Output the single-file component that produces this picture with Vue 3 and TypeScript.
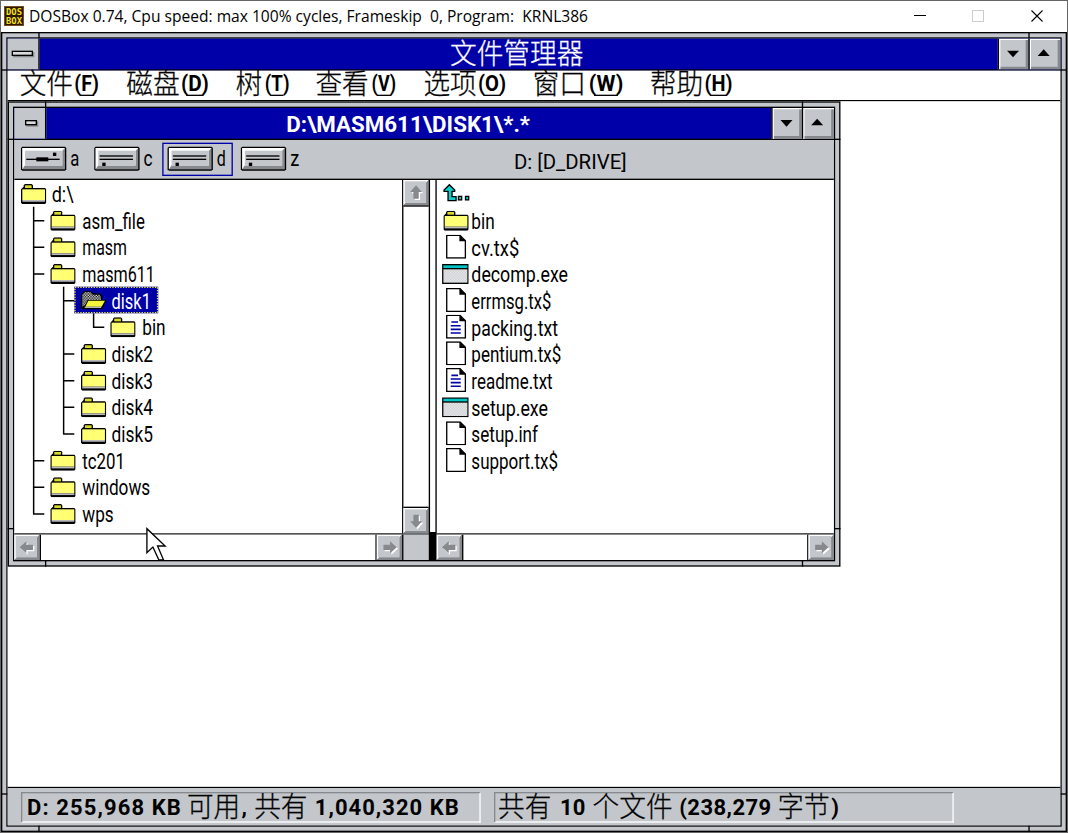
<script setup lang="ts">
import { h } from 'vue'
import type { FunctionalComponent } from 'vue'

interface Run { t: string; x: number; w: number; cjk?: boolean }
interface MenuItem { label: string; key: string; w: number; k: number }
interface TreeRow { name: string; level: number; w: number; open?: boolean }
interface FileRow { name: string; kind: 'folder' | 'doc' | 'text' | 'exe'; w: number }

/* One line of text stretched to a fixed width, like a bitmap font cell run. */
const Fit: FunctionalComponent<{ t: string; w: number; height: number; base: number }> = (p) =>
  h('svg', { width: p.w, height: p.height, style: { overflow: 'visible', display: 'block', flex: 'none' } }, [
    h('text', { x: 0, y: p.base, textLength: p.w, lengthAdjust: 'spacingAndGlyphs', fill: 'currentColor', style: { whiteSpace: 'pre' } }, p.t),
  ])
Fit.props = ['t', 'w', 'height', 'base']

/* Resizable window border: double black outline, grey band and corner notches. */
const Frame: FunctionalComponent<{ w: number; h: number }> = (p) => {
  const r = (x: number, y: number, w: number, ht: number, fill = '#000') => h('rect', { x, y, width: w, height: ht, fill })
  const W = p.w
  const H = p.h
  return h('svg', { width: W, height: H }, [
    r(0, 0, W, H), r(1, 1, W - 2, H - 2, '#c3c7cb'), r(4, 4, W - 8, H - 8), r(5, 5, W - 10, H - 10, '#c3c7cb'),
    r(28, 0, 1, 5), r(W - 29, 0, 1, 5), r(28, H - 5, 1, 5), r(W - 29, H - 5, 1, 5),
    r(0, 28, 5, 1), r(W - 5, 28, 5, 1), r(0, H - 29, 5, 1), r(W - 5, H - 29, 5, 1),
  ])
}
Frame.props = ['w', 'h']

const arrows: Record<string, string> = {
  up: 'M9.5 4L14 9H11.5V14H7.5V9H5Z',
  down: 'M9.5 15L14 10H11.5V5H7.5V10H5Z',
  left: 'M4 9.5L9 5V7.5H14V11.5H9V14Z',
  right: 'M15 9.5L10 5V7.5H5V11.5H10V14Z',
}
const Arrow: FunctionalComponent<{ dir: string }> = (p) =>
  h('svg', { width: 19, height: 19, style: { display: 'block', flex: 'none' } }, [
    h('rect', { width: 19, height: 19, fill: '#868a8e' }),
    h('path', { d: 'M0 0H19L17 2V17H2L0 19Z', fill: '#fff' }),
    h('path', { d: 'M19 0V19H0L2 17H17V2Z', fill: '#868a8e' }),
    h('rect', { x: 1, y: 1, width: 16, height: 16, fill: '#c3c7cb' }),
    h('path', { d: arrows[p.dir], fill: '#fff', transform: 'translate(1 1)' }),
    h('path', { d: arrows[p.dir], fill: '#868a8e' }),
  ])
Arrow.props = ['dir']

const menu: MenuItem[] = [
  { label: '文件', key: 'F', w: 40, k: 18.5 },
  { label: '磁盘', key: 'D', w: 40, k: 21 },
  { label: '树', key: 'T', w: 20, k: 18.5 },
  { label: '查看', key: 'V', w: 40, k: 18.5 },
  { label: '选项', key: 'O', w: 40, k: 21 },
  { label: '窗口', key: 'W', w: 40, k: 26 },
  { label: '帮助', key: 'H', w: 40, k: 21 },
]

const drives = ['a', 'c', 'd', 'z']

const tree: TreeRow[] = [
  { name: 'd:\\', level: 0, w: 16.5 },
  { name: 'asm_file', level: 1, w: 47 },
  { name: 'masm', level: 1, w: 33.5 },
  { name: 'masm611', level: 1, w: 54.5 },
  { name: 'disk1', level: 2, w: 29.5, open: true },
  { name: 'bin', level: 3, w: 17.5 },
  { name: 'disk2', level: 2, w: 31 },
  { name: 'disk3', level: 2, w: 31 },
  { name: 'disk4', level: 2, w: 31 },
  { name: 'disk5', level: 2, w: 31 },
  { name: 'tc201', level: 1, w: 32 },
  { name: 'windows', level: 1, w: 51 },
  { name: 'wps', level: 1, w: 23.5 },
]

const files: FileRow[] = [
  { name: 'bin', kind: 'folder', w: 17.5 },
  { name: 'cv.tx$', kind: 'doc', w: 36 },
  { name: 'decomp.exe', kind: 'exe', w: 72.5 },
  { name: 'errmsg.tx$', kind: 'doc', w: 60 },
  { name: 'packing.txt', kind: 'text', w: 65 },
  { name: 'pentium.tx$', kind: 'doc', w: 67.5 },
  { name: 'readme.txt', kind: 'text', w: 61 },
  { name: 'setup.exe', kind: 'exe', w: 57.5 },
  { name: 'setup.inf', kind: 'doc', w: 50 },
  { name: 'support.tx$', kind: 'doc', w: 65 },
]

const disk: Run[] = [
  { t: 'D: 255,968 KB', x: 3.5, w: 115.5 },
  { t: '可用', x: 123.5, w: 40, cjk: true },
  { t: ',', x: 164.5, w: 4 },
  { t: '共有', x: 174, w: 40, cjk: true },
  { t: '1,040,320 KB', x: 219.5, w: 108 },
]
const count: Run[] = [
  { t: '共有', x: 2, w: 40, cjk: true },
  { t: '10', x: 48.5, w: 19 },
  { t: '个文件', x: 73, w: 60, cjk: true },
  { t: '(238,279', x: 138, w: 69 },
  { t: '字节', x: 212, w: 39, cjk: true },
  { t: ')', x: 252, w: 6 },
]
</script>

<template>
  <div class="host">
    <header class="hostbar">
      <svg class="logo" width="20" height="20" viewBox="0 0 20 20">
        <rect width="20" height="20" fill="#7a4a18" />
        <rect x="1" y="1" width="18" height="18" fill="#2c1604" />
        <text x="2" y="9" textLength="16" lengthAdjust="spacingAndGlyphs">DOS</text>
        <text x="2" y="17.5" textLength="16" lengthAdjust="spacingAndGlyphs">BOX</text>
      </svg>
      <Fit class="hosttitle" t="DOSBox 0.74, Cpu speed: max 100% cycles, Frameskip  0, Program:  KRNL386" :w="559" :height="31" :base="21.3" />
      <svg class="controls" width="130" height="31" viewBox="0 0 130 31" fill="none">
        <path d="M0 14.5H12" stroke="#000" />
        <rect x="58.5" y="9.5" width="11" height="11" stroke="#ccc" />
        <path d="M117.5 9.5L128.5 20.5M128.5 9.5L117.5 20.5" stroke="#000" stroke-width="1.1" />
      </svg>
    </header>

    <div class="viewport">
      <div class="screen">
        <svg class="defs" width="0" height="0">
          <defs>
            <pattern id="ydither" width="2" height="2" patternUnits="userSpaceOnUse">
              <rect width="2" height="2" fill="#ffff38" />
              <path d="M0 0h1v1H0zM1 1h1v1H1z" fill="#ffffb0" />
            </pattern>
            <pattern id="gdither" width="2" height="2" patternUnits="userSpaceOnUse">
              <rect width="2" height="2" fill="#c6c8cb" />
              <path d="M0 0h1v1H0zM1 1h1v1H1z" fill="#eceeef" />
            </pattern>
            <pattern id="kdither" width="2" height="2" patternUnits="userSpaceOnUse">
              <rect width="2" height="2" fill="#111" />
              <path d="M0 0h1v1H0zM1 1h1v1H1z" fill="#ddd" />
            </pattern>
            <symbol id="folder" viewBox="0 0 19 15">
              <path d="M3 0H8L9 1V3H18L19 4V14L18 15H1L0 14V4L2 2V1Z" fill="#000" />
              <rect x="3" y="1" width="5" height="2" fill="#d9d92a" />
              <rect x="1" y="4" width="17" height="8" fill="url(#ydither)" />
              <rect x="1" y="12" width="17" height="1.3" fill="#b8babd" />
            </symbol>
            <symbol id="open" viewBox="0 0 19 15">
              <path d="M2 1L4 0H7L9 2H14L16 4V7H19L16 14H1L0 13V3Z" fill="#000" />
              <path d="M1 3L3 1H7L9 3H14L15 5V7H5L3 11L1 12Z" fill="url(#kdither)" />
              <path d="M5.5 7.5H18L15.5 12H3.3Z" fill="#f4f43a" />
              <path d="M3.3 12H15.5L15 13H2.5Z" fill="#b8babd" />
            </symbol>
            <symbol id="doc" viewBox="0 0 19 18">
              <path d="M1.5 .5H11.5L15.5 4.5V17.5H1.5Z" fill="#fff" stroke="#000" />
              <path d="M11.5 .5V4.5H15.5M12.5 1.5V3.5H14.5" fill="none" stroke="#000" />
            </symbol>
            <symbol id="text" viewBox="0 0 19 18">
              <use href="#doc" width="19" height="18" />
              <path d="M5 5.5H10M4.5 8.3H12M4.5 11H12M4.5 13.7H12" stroke="#0000a8" stroke-width="1.2" fill="none" />
            </symbol>
            <symbol id="exe" viewBox="0 0 20 15">
              <rect width="20" height="15" fill="#000" />
              <rect x="1" y="1" width="18" height="2" fill="#00c4c4" />
              <rect x="1" y="4" width="18" height="10" fill="url(#gdither)" />
            </symbol>
          </defs>
        </svg>

        <Frame class="frame" :w="800" :h="600" />
        <main class="window">
          <div class="titlebar">
            <div class="sys">
              <svg width="23" height="23">
                <rect x="4" y="10" width="16" height="4" fill="#868a8e" />
                <rect x="3.5" y="9.5" width="15" height="3" fill="#d8dadd" stroke="#000" />
              </svg>
            </div>
            <div class="caption cjk"><Fit t="文件管理器" :w="100" :height="23" :base="19.3" /></div>
            <div class="tbtn"><svg width="22" height="23"><path d="M6 9H15L10.5 14Z" /></svg></div>
            <div class="tbtn wide"><svg width="23" height="23"><path d="M6 13H15L10.5 8Z" /></svg></div>
          </div>

          <nav class="menubar">
            <div v-for="m in menu" :key="m.key" class="menuitem">
              <Fit class="cjk" :t="m.label" :w="m.w" :height="22" :base="17.8" />
              <div class="key">
                <Fit :t="'(' + m.key + ')'" :w="m.k" :height="18" :base="15.6" />
                <i></i>
              </div>
            </div>
          </nav>

          <section class="workspace">
            <article class="child">
              <Frame class="frame" :w="625" :h="349" />
              <div class="childbody">
                <div class="titlebar">
                  <div class="sys">
                    <svg width="23" height="23">
                      <rect x="9" y="10" width="9" height="4" fill="#868a8e" />
                      <rect x="8.5" y="9.5" width="8" height="3" fill="#d8dadd" stroke="#000" />
                    </svg>
                  </div>
                  <div class="caption bold"><Fit t="D:\MASM611\DISK1\*.*" :w="183" :height="23" :base="17.8" /></div>
                  <div class="tbtn"><svg width="22" height="23"><path d="M6 9H15L10.5 14Z" /></svg></div>
                  <div class="tbtn wide"><svg width="23" height="23"><path d="M6 13H15L10.5 8Z" /></svg></div>
                </div>

                <div class="drivebar">
                  <div v-for="d in drives" :key="d" class="drive" :class="{ current: d === 'd' }">
                    <svg width="34" height="18">
                      <path d="M1 0H33L34 1V17L33 18H1L0 17V1Z" />
                      <rect x="1" y="1" width="32" height="16" fill="#868a8e" />
                      <path d="M1 1H33L31 3V14H3L1 17Z" fill="#fff" />
                      <rect x="3" y="3" width="28" height="11.5" fill="#c3c7cb" />
                      <g v-if="d === 'a'">
                        <rect x="4" y="9" width="25" height="1" /><rect x="11.5" y="8" width="9" height="3" /><rect x="24" y="4.5" width="2.5" height="2.5" />
                      </g>
                      <g v-else>
                        <rect x="4" y="6.5" width="25" height="1" /><rect x="4" y="9" width="25" height="1" /><rect x="6" y="12" width="2.5" height="2.5" />
                      </g>
                    </svg>
                    <Fit :t="d" :w="6.8" :height="23" :base="16.6" />
                  </div>
                  <div class="volume"><Fit t="D: [D_DRIVE]" :w="84.5" :height="29" :base="21.7" /></div>
                </div>

                <div class="panes">
                  <div class="left">
                    <div class="upper">
                      <div class="tree">
                        <svg class="lines" width="120" height="265">
                          <path d="M14.5 20V250.5M14.5 30.5H22.5M14.5 50.5H22.5M14.5 70.5H22.5M14.5 210.5H22.5M14.5 230.5H22.5M14 250.5H22.5" />
                          <path d="M37 80V190.5M37 90.5H46M37 130.5H45M37 150.5H45M37 170.5H45M36.5 190.5H45" />
                          <path d="M59.5 100V110.5M59 110.5H67.5" />
                        </svg>
                        <div v-for="r in tree" :key="r.name + r.level" class="row" :class="'l' + r.level">
                          <div class="entry" :class="{ selected: r.open }">
                            <svg v-if="r.open" class="focus" width="63" height="20">
                              <rect x=".5" y=".5" width="62" height="19" />
                            </svg>
                            <svg class="ico" width="19" height="15"><use :href="r.open ? '#open' : '#folder'" width="19" height="15" /></svg>
                            <Fit :t="r.name" :w="r.w" :height="20" :base="16.6" />
                          </div>
                        </div>
                      </div>
                      <div class="vscroll"><Arrow dir="up" /><div class="vtrack"></div><Arrow dir="down" /></div>
                    </div>
                    <div class="hscroll"><Arrow dir="left" /><div class="htrack"></div><Arrow dir="right" /><div class="corner"></div></div>
                  </div>
                  <div class="split"><div class="slit"></div></div>
                  <div class="right">
                    <div class="files">
                      <div class="parent">
                        <svg width="22" height="14">
                          <path d="M4.5 .5L8.5 4.5V5.5H6.5V9.5H9.5V12.5H3.5V5.5H.5V4.5Z" fill="#1cc" stroke="#000" />
                          <rect x="11.3" y="9.3" width="2.4" height="2.6" fill="#1cc" stroke="#000" /><rect x="16.6" y="9.3" width="2.4" height="2.6" fill="#1cc" stroke="#000" />
                        </svg>
                      </div>
                      <div v-for="f in files" :key="f.name" class="file" :class="f.kind">
                        <div class="cell">
                          <svg v-if="f.kind === 'folder'" width="19" height="15"><use href="#folder" width="19" height="15" /></svg>
                          <svg v-else-if="f.kind === 'exe'" width="20" height="15"><use href="#exe" width="20" height="15" /></svg>
                          <svg v-else width="19" height="18"><use :href="'#' + f.kind" width="19" height="18" /></svg>
                        </div>
                        <Fit :t="f.name" :w="f.w" :height="20" :base="16.8" />
                      </div>
                    </div>
                    <div class="hscroll"><Arrow dir="left" /><div class="htrack"></div><Arrow dir="right" /></div>
                  </div>
                </div>
              </div>
            </article>

            <svg class="cursor" width="16" height="24" viewBox="0 0 16 24">
              <path d="M.5 .5V18.5L5 14.3L9.5 24H13L8.5 13.5H14.2Z" fill="#fff" stroke="#000" />
            </svg>
          </section>

          <footer class="status">
            <div class="panel">
              <svg width="343" height="21">
                <text v-for="r in disk" :key="r.x" :x="r.x" :y="r.cjk ? 18 : 16.6" :class="{ cjk: r.cjk }" :textLength="r.w" :lengthAdjust="r.cjk ? 'spacingAndGlyphs' : 'spacing'">{{ r.t }}</text>
              </svg>
            </div>
            <div class="panel">
              <svg width="343" height="21">
                <text v-for="r in count" :key="r.x" :x="r.x" :y="r.cjk ? 18 : 16.6" :class="{ cjk: r.cjk }" :textLength="r.w" :lengthAdjust="r.cjk ? 'spacingAndGlyphs' : 'spacing'">{{ r.t }}</text>
              </svg>
            </div>
          </footer>
        </main>
      </div>
    </div>
  </div>
</template>

<style>
html, body { margin: 0; background: #55565a; overflow: hidden; }
</style>

<style scoped>
.host { width: 1066px; height: 832px; padding: 1px 1px 0; background: #666; overflow: hidden; }
.hostbar { display: flex; height: 31px; background: #fff; align-items: flex-start; }
.logo { margin: 5px 0 0 3px; flex: none; }
.logo text { font: bold 8.5px "DejaVu Sans Mono", monospace; fill: #f0e020; }
.hosttitle { margin-left: 5px; font: 15.5px "Open Sans", "Noto Sans", sans-serif; color: #000; }
.controls { margin-left: auto; margin-right: 23px; flex: none; }

.viewport { width: 1066px; height: 800px; overflow: hidden; }
/* The guest desktop is laid out in its own 800x600 pixels and scaled up. */
.screen {
  position: relative; width: 800px; height: 600px;
  transform: scale(1.3325, 1.33333); transform-origin: 0 0;
  font: 16px Roboto, "Liberation Sans", sans-serif; color: #000;
}
.defs, .frame { position: absolute; left: 0; top: 0; display: block; }
svg { display: block; flex: none; overflow: visible; }
.cjk { font-family: "Noto Sans CJK SC", sans-serif; font-size: 21px; font-weight: 300; stroke: currentColor; stroke-width: .2px; }
.bold { font-weight: 700; }

.window { position: relative; box-sizing: border-box; height: 600px; padding: 5px; display: flex; flex-direction: column; }
.titlebar { display: flex; height: 23px; flex: none; background: #0000a8; border-bottom: 1px solid #000; }
.sys { width: 23px; background: #c3c7cb; border-right: 1px solid #000; }
.caption { flex: 1; display: flex; justify-content: center; color: #fff; }
.caption.cjk { padding-right: 4px; }
.caption.bold { padding-right: 1.5px; }
.tbtn {
  box-sizing: border-box; width: 23px; height: 23px; border-left: 1px solid #000; background: #c3c7cb;
  box-shadow: inset 1px 1px #fff, inset -2px -2px #868a8e;
}
.tbtn.wide { width: 24px; }

.menubar { display: flex; gap: 20px; height: 22px; flex: none; padding-left: 8.7px; background: #fff; border-bottom: 1px solid #000; }
.menuitem { display: flex; gap: 1.6px; }
.key { display: flex; flex-direction: column; font: bold 16.5px Roboto, sans-serif; }
.key i { height: 1px; margin: 0 4px; background: #000; }

.workspace { position: relative; flex: 1; background: #fff; }
.child { position: absolute; left: 0; top: 0; width: 625px; height: 349px; }
.childbody { position: relative; box-sizing: border-box; height: 349px; padding: 5px; display: flex; flex-direction: column; }
.drivebar { display: flex; gap: 2px; height: 27px; padding: 2px 0 0 1px; background: #c3c7cb; border-bottom: 1px solid #000; flex: none; }
.drive { box-sizing: border-box; display: flex; gap: 3px; width: 53px; height: 25px; padding: 1px 0 0 4px; }
.drive > svg:first-child { margin-top: 2px; }
.drive.current { padding: 0 0 0 3px; border: 1px solid #0000a8; }
.volume { margin: -2px 0 0 154px; font-size: 15.5px; }

.panes { display: flex; flex: 1; background: #fff; min-height: 0; }
.left { width: 311px; display: flex; flex-direction: column; }
.upper { display: flex; height: 265px; border-bottom: 1px solid #000; }
.tree { position: relative; width: 291px; }
.lines { position: absolute; left: 0; top: 0; }
.lines path { fill: none; stroke: #000; stroke-width: 1.1; }
.row { height: 20px; display: flex; }
.entry { position: relative; display: flex; height: 20px; gap: 4px; padding: 0 5px; }
.entry .ico { margin-top: 3px; position: relative; }
.l1 { padding-left: 22px; }
.l2 { padding-left: 45px; }
.l3 { padding-left: 67px; }
.l1 .entry, .l3 .entry { gap: 4.6px; }
.selected { box-sizing: border-box; width: 63px; background: #0000a8; color: #fff; }
.focus { position: absolute; left: 0; top: 0; }
.focus rect { fill: none; stroke: #e8e840; stroke-dasharray: 1 1; }
.vscroll { display: flex; flex-direction: column; width: 19px; border-left: 1px solid #000; }
.vtrack { flex: 1; border-top: 1px solid #000; border-bottom: 1px solid #000; }
.hscroll { display: flex; height: 19px; }
.htrack { flex: 1; border-left: 1px solid #000; border-right: 1px solid #000; background: #fff; }
.corner { width: 19px; border-left: 1px solid #000; background: #c3c7cb; }
.split { width: 6px; background: #000; }
.slit { width: 4px; height: 264px; margin-left: 1px; background: #fff; }
.right { flex: 1; display: flex; flex-direction: column; }
.files { height: 265px; border-bottom: 1px solid #000; padding-left: 4px; }
.parent { height: 20px; padding: 3px 0 0 .5px; box-sizing: border-box; }
.file { display: flex; height: 20px; }
.cell { width: 22px; padding: 1.4px 0 0 1.7px; box-sizing: border-box; }
.folder .cell { padding: 3px 0 0 1px; }
.exe .cell { padding: 3px 0 0 .4px; }

.cursor { position: absolute; left: 104px; top: 320.2px; }

.status { box-sizing: border-box; display: flex; gap: 10px; height: 29px; flex: none; padding: 3px 0 0 10px; background: #c3c7cb; border-top: 1px solid #000; }
.panel { width: 343px; height: 21px; border: 1px solid; border-color: #868a8e #fff #fff #868a8e; }
.panel text { font: bold 16.5px Roboto, sans-serif; }
.panel text.cjk { font: 300 21px "Noto Sans CJK SC", sans-serif; }
</style>
